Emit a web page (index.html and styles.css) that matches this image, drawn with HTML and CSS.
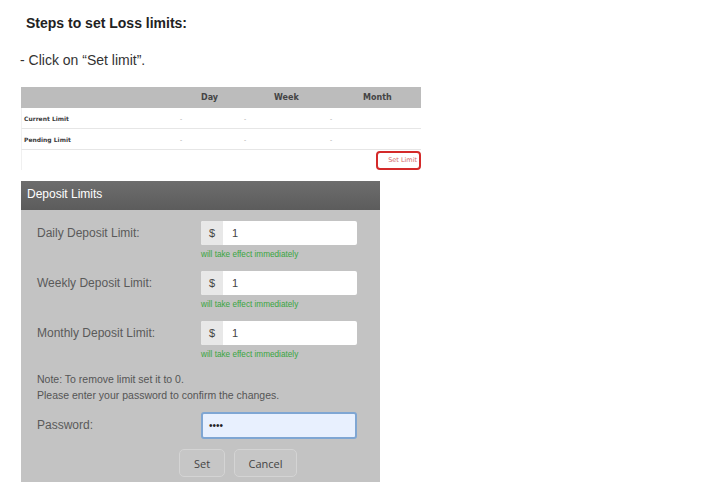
FILE: index.html
```html
<!DOCTYPE html>
<html lang="en">
<head>
    <meta charset="UTF-8">
    <title>Loss limits</title>
    <link rel="stylesheet" href="styles.css">
</head>
<body>
    <div class="page">
        <h2 class="steps-title">Steps to set Loss limits:</h2>
        <p class="step">- Click on “Set limit”.</p>

        <div class="limits-table">
            <div class="cell head"></div>
            <div class="cell head col-day">Day</div>
            <div class="cell head col-week">Week</div>
            <div class="cell head col-month">Month</div>

            <div class="cell row-label">Current Limit</div>
            <div class="cell dash d-day">-</div>
            <div class="cell dash d-week">-</div>
            <div class="cell dash d-month">-</div>

            <div class="cell row-label">Pending Limit</div>
            <div class="cell dash d-day">-</div>
            <div class="cell dash d-week">-</div>
            <div class="cell dash d-month">-</div>

            <div class="action-row">
                <span class="set-limit">Set Limit</span>
            </div>
        </div>

        <div class="modal">
            <div class="modal-header">Deposit Limits</div>
            <div class="modal-body">
                <div class="form-row">
                    <label class="form-label">Daily Deposit Limit:</label>
                    <div class="field">
                        <div class="input-group">
                            <span class="addon">$</span>
                            <span class="input">1</span>
                        </div>
                        <div class="hint">will take effect immediately</div>
                    </div>
                </div>
                <div class="form-row">
                    <label class="form-label">Weekly Deposit Limit:</label>
                    <div class="field">
                        <div class="input-group">
                            <span class="addon">$</span>
                            <span class="input">1</span>
                        </div>
                        <div class="hint">will take effect immediately</div>
                    </div>
                </div>
                <div class="form-row">
                    <label class="form-label">Monthly Deposit Limit:</label>
                    <div class="field">
                        <div class="input-group">
                            <span class="addon">$</span>
                            <span class="input">1</span>
                        </div>
                        <div class="hint">will take effect immediately</div>
                    </div>
                </div>

                <p class="note">Note: To remove limit set it to 0.<br>Please enter your password to confirm the changes.</p>

                <div class="form-row password-row">
                    <label class="form-label">Password:</label>
                    <div class="password">••••</div>
                </div>

                <div class="buttons">
                    <button class="btn btn-set">Set</button>
                    <button class="btn btn-cancel">Cancel</button>
                </div>
            </div>
        </div>
    </div>
</body>
</html>
```

FILE: styles.css
```css
body {
    margin: 0;
    background: #ffffff;
    font-family: 'Liberation Sans', Arial, sans-serif;
    color: #222;
}

.page {
    padding: 15px 0 0 21px;
}

.steps-title {
    margin: 0 0 0 5px;
    font-size: 14px;
    font-weight: 700;
    line-height: 16px;
    color: #222;
}

.step {
    margin: 21px 0 0 -1px;
    font-size: 14px;
    line-height: 16px;
    color: #333;
}

/* limits table */
.limits-table {
    margin-top: 19px;
    width: 400px;
    display: grid;
    grid-template-columns: 139px 80px 80px 101px;
    font-family: 'DejaVu Sans', Verdana, sans-serif;
}

.cell {
    height: 21px;
    line-height: 21px;
    font-size: 6px;
    border-bottom: 1px solid #e6e6e6;
    box-sizing: border-box;
}

.head {
    background: #bcbcbc;
    border-bottom: none;
    font-size: 8px;
    font-weight: 700;
    color: #444;
}

.col-day { padding-left: 41px; }
.col-week { padding-left: 34px; }
.col-month { padding-left: 43px; }

.row-label {
    padding-left: 2px;
    font-weight: 700;
    color: #3a3a3a;
    border-left: 1px solid #f0f0f0;
}

.dash {
    color: #999;
}

.d-day { padding-left: 20px; }
.d-week { padding-left: 4px; }
.d-month { padding-left: 10px; }

.action-row {
    grid-column: 1 / 5;
    height: 20px;
    display: flex;
    justify-content: flex-end;
    align-items: center;
    border-left: 1px solid #f0f0f0;
}

.set-limit {
    font-size: 6.5px;
    color: #d46a6a;
    border: 2px solid #d42a2a;
    border-radius: 4px;
    height: 19px;
    line-height: 15px;
    box-sizing: border-box;
    padding: 0 2px 0 10px;
}

/* modal */
.modal {
    margin-top: 11px;
    width: 359px;
}

.modal-header {
    height: 29px;
    line-height: 27px;
    padding-left: 6px;
    background: linear-gradient(#6d6d6d, #5c5c5c);
    color: #fff;
    font-size: 12px;
}

.modal-body {
    background: #c3c3c3;
    padding: 11px 0 5px 0;
}

.form-row {
    display: flex;
    margin-bottom: 11px;
}

.form-label {
    width: 164px;
    padding-left: 16px;
    font-size: 12px;
    line-height: 24px;
    color: #5a5a5a;
}

.input-group {
    display: flex;
    width: 156px;
    height: 24px;
    background: #fff;
    border-radius: 2px;
    overflow: hidden;
}

.addon {
    width: 22px;
    background: #e8e8e8;
    text-align: center;
    line-height: 24px;
    font-size: 11px;
    color: #444;
}

.input {
    padding-left: 9px;
    line-height: 24px;
    font-size: 11px;
    color: #444;
}

.hint {
    margin-top: 5px;
    font-size: 8.2px;
    line-height: 10px;
    color: #39a53f;
}

.note {
    margin: 4px 0 0 16px;
    font-size: 10.5px;
    line-height: 16px;
    color: #555;
}

.password-row {
    margin-top: 9px;
    margin-bottom: 10px;
}

.password-row .form-label {
    line-height: 27px;
}

.password {
    width: 156px;
    height: 27px;
    box-sizing: border-box;
    border: 2px solid #7fa6d3;
    border-radius: 3px;
    background: #e8f0fe;
    padding-left: 6px;
    line-height: 23px;
    font-size: 10px;
    color: #222;
}

.buttons {
    display: flex;
    gap: 9px;
    padding-left: 158px;
}

.btn {
    height: 28px;
    border: 1px solid #d4d4d4;
    border-radius: 5px;
    background: #c6c6c6;
    font-family: 'Open Sans', sans-serif;
    font-size: 11px;
    color: #444;
}

.btn-set { width: 46px; }
.btn-cancel { width: 63px; }
```
